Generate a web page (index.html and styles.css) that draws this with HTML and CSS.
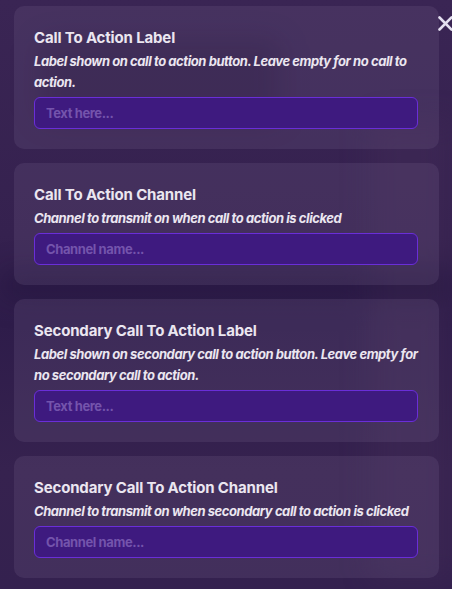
FILE: index.html
```html
<!DOCTYPE html>
<html lang="en">
<head>
<meta charset="utf-8">
<link rel="stylesheet" href="styles.css">
</head>
<body>
<div class="backdrop">
  <div class="blur-shape shape-a"></div>
  <div class="blur-shape shape-b"></div>
  <div class="blur-shape shape-c"></div>
</div>
<button class="close" aria-label="Close">
  <svg width="15" height="15" viewBox="0 0 15 15"><path d="M1.5 1.5 L13.5 13.5 M13.5 1.5 L1.5 13.5" stroke="#e4dff0" stroke-width="2.6" stroke-linecap="round"/></svg>
</button>
<main class="list">
  <section class="card">
    <h2 class="title">Call To Action Label</h2>
    <p class="desc">Label shown on call to action button. Leave empty for no call to action.</p>
    <input class="field" type="text" placeholder="Text here...">
  </section>
  <section class="card">
    <h2 class="title">Call To Action Channel</h2>
    <p class="desc">Channel to transmit on when call to action is clicked</p>
    <input class="field" type="text" placeholder="Channel name...">
  </section>
  <section class="card">
    <h2 class="title">Secondary Call To Action Label</h2>
    <p class="desc">Label shown on secondary call to action button. Leave empty for no secondary call to action.</p>
    <input class="field" type="text" placeholder="Text here...">
  </section>
  <section class="card">
    <h2 class="title">Secondary Call To Action Channel</h2>
    <p class="desc">Channel to transmit on when secondary call to action is clicked</p>
    <input class="field" type="text" placeholder="Channel name...">
  </section>
</main>
</body>
</html>
```

FILE: styles.css
```css
* { box-sizing: border-box; }
html, body { height: 100%; }
body {
  margin: 0;
  overflow: hidden;
  background: linear-gradient(180deg, #3a2554 0%, #35214f 40%, #2e1c4a 55%, #36224f 80%, #34214f 100%);
  font-family: Inter, "Noto Sans", sans-serif;
  position: relative;
}
.backdrop {
  position: absolute;
  inset: 0;
  overflow: hidden;
  filter: blur(14px);
}
.blur-shape { position: absolute; border-radius: 12px; }
.shape-a { left: 40px; top: 40px; width: 240px; height: 80px; background: rgba(20, 8, 40, 0.25); }
.shape-b { left: 370px; top: 120px; width: 90px; height: 460px; background: rgba(70, 45, 90, 0.35); }
.shape-c { left: 0; top: 270px; width: 452px; height: 30px; background: rgba(20, 10, 45, 0.3); }
.close {
  position: absolute;
  top: 16px;
  left: 438px;
  padding: 0;
  border: 0;
  background: none;
  width: 15px;
  height: 15px;
  z-index: 2;
}
.close svg { display: block; }
.list {
  position: relative;
  z-index: 1;
  display: flex;
  flex-direction: column;
  gap: 14px;
  padding: 6px 13px 0 14px;
}
.card {
  background: rgba(120, 100, 140, 0.22);
  border-radius: 10px;
  padding: 20px 21px 20px 20px;
  display: flex;
  flex-direction: column;
}
.title {
  margin: 0 0 1px;
  font-size: 15px;
  line-height: 24px;
  font-weight: 700;
  color: #ebe6f0;
  letter-spacing: -0.15px;
}
.desc {
  margin: 0 0 4px;
  font-size: 13px;
  line-height: 21px;
  font-weight: 700;
  font-style: italic;
  color: #ebe6f0;
  letter-spacing: -0.43px;
}
.field {
  display: block;
  width: 100%;
  height: 32px;
  background: #3e1a7f;
  border: 1px solid #6a2ed8;
  border-radius: 6px;
  padding: 0 11px;
  font-family: Inter, "Noto Sans", sans-serif;
  font-size: 13px;
  font-weight: 700;
  color: #ebe6f0;
  letter-spacing: -0.4px;
  outline: none;
}
.field::placeholder { color: #7454ac; }
```
